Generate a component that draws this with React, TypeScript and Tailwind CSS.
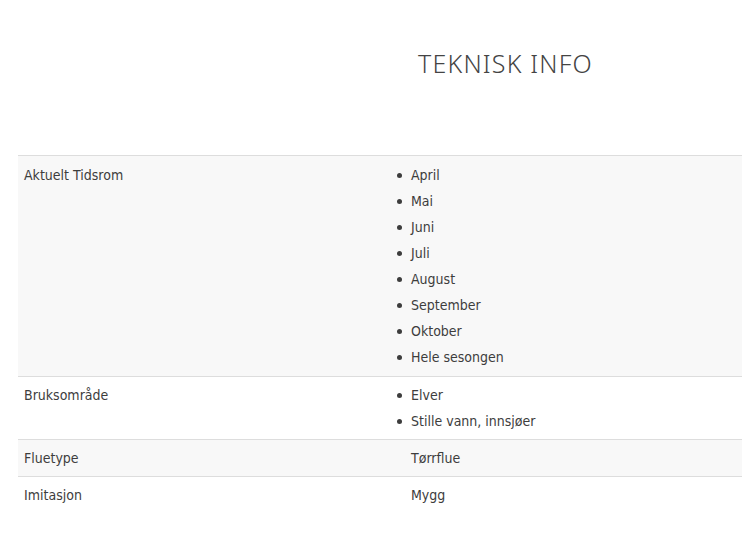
const months = ["April", "Mai", "Juni", "Juli", "August", "September", "Oktober", "Hele sesongen"]
const areas = ["Elver", "Stille vann, innsjøer"]

function BulletList({ items }: { items: string[] }) {
  return (
    <ul className="flex flex-col">
      {items.map((item) => (
        <li key={item} className="flex items-center leading-[26px]">
          <span className="mr-[9px] h-[5px] w-[5px] rounded-full bg-[#3d3d3d]" />
          {item}
        </li>
      ))}
    </ul>
  )
}

export default function App() {
  return (
    <div className="h-[539px] w-[742px] overflow-hidden bg-white font-['DejaVu_Sans_Condensed','DejaVu_Sans',sans-serif] text-[14px] text-[#3d3d3d]">
      <div className="h-[155px] pl-[418px] pt-[45px]">
        <h2 className="font-['Noto_Sans',sans-serif] text-[25px] leading-[36px] font-light tracking-[1.2px] text-[#444]">
          TEKNISK INFO
        </h2>
      </div>
      <table className="ml-[18px] w-[724px] border-collapse border-t border-[#dddddd]">
        <tbody>
          <tr className="border-b border-[#dddddd] bg-[#f8f8f8]">
            <td className="w-[369px] px-[6px] py-[6px] align-top leading-[26px]">Aktuelt Tidsrom</td>
            <td className="py-[6px] pl-[10px] align-top">
              <BulletList items={months} />
            </td>
          </tr>
          <tr className="border-b border-[#dddddd] bg-white">
            <td className="px-[6px] py-[5px] align-top leading-[26px]">Bruksområde</td>
            <td className="py-[5px] pl-[10px] align-top">
              <BulletList items={areas} />
            </td>
          </tr>
          <tr className="border-b border-[#dddddd] bg-[#f8f8f8]">
            <td className="px-[6px] py-[5px] align-top leading-[26px]">Fluetype</td>
            <td className="py-[5px] pl-[24px] align-top leading-[26px]">Tørrflue</td>
          </tr>
          <tr className="bg-white">
            <td className="px-[6px] py-[5px] align-top leading-[26px]">Imitasjon</td>
            <td className="py-[5px] pl-[24px] align-top leading-[26px]">Mygg</td>
          </tr>
        </tbody>
      </table>
    </div>
  )
}
